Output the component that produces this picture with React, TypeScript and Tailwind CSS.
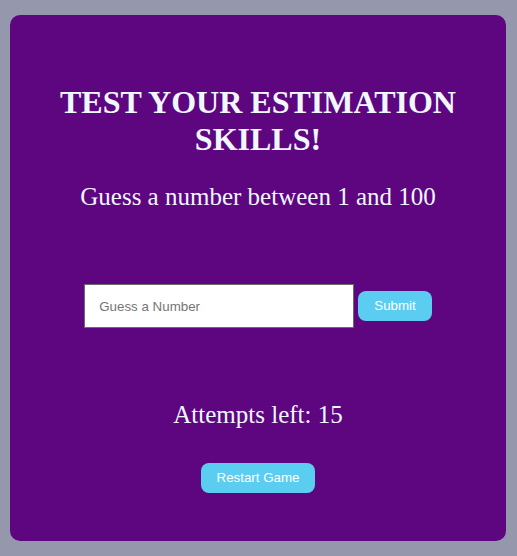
export default function App() {
  return (
    <div className="min-h-[556px] w-full bg-[#9598ad] pt-[15px] pb-[15px] px-[10px]">
      <div className="h-[526px] w-[496px] rounded-[10px] bg-[#5e0680] flex flex-col items-center text-center text-[#f0f8ff] pt-[69px]" style={{ fontFamily: '"Liberation Serif", serif' }}>
        <h1 className="text-[32px] font-bold leading-[36.8px] w-[420px]">TEST YOUR ESTIMATION SKILLS!</h1>
        <p className="mt-[25px] text-[25px] leading-[28.75px]">Guess a number between 1 and 100</p>
        <div className="mt-[73px] flex items-center gap-[4px]" style={{ fontFamily: '"Liberation Sans", Arial, sans-serif' }}>
          <input
            type="text"
            placeholder="Guess a Number"
            className="w-[270px] h-[44px] border border-[#6b6b6b] bg-white pl-[14px] text-[13.33px] text-black placeholder:text-[#757575] outline-none"
          />
          <button className="h-[30px] px-[16px] rounded-[8px] bg-[#5bcdf1] text-white text-[13.33px]">Submit</button>
        </div>
        <p className="mt-[73px] text-[25px] leading-[28.75px]">Attempts left: 15</p>
        <button className="mt-[33px] h-[30px] px-[16px] rounded-[8px] bg-[#5bcdf1] text-white text-[13.33px]" style={{ fontFamily: '"Liberation Sans", Arial, sans-serif' }}>Restart Game</button>
      </div>
    </div>
  );
}
